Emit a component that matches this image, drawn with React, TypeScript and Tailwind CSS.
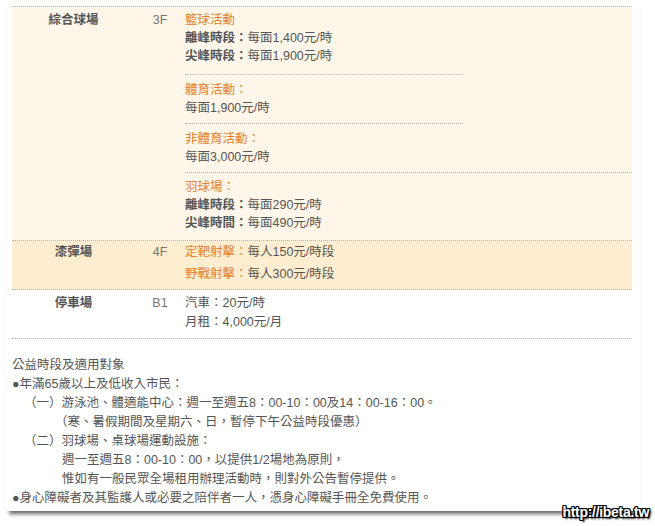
import React from 'react';

const orange = 'text-[#e6822a]';

const Sep = ({ short }: { short?: boolean }) => (
  <div className={`border-t border-dotted border-[#b5b0a8] ${short ? 'w-[278px]' : 'w-full'}`} />
);

const Bold = ({ children }: { children: React.ReactNode }) => (
  <span className="font-bold text-[#555]">{children}</span>
);

const notes = [
  { pl: 'pl-0', text: '公益時段及適用對象' },
  { pl: 'pl-0', text: '●年滿65歲以上及低收入市民：' },
  { pl: 'pl-[12px]', text: '（一）游泳池、體適能中心：週一至週五8：00-10：00及14：00-16：00。' },
  { pl: 'pl-[43px]', text: '（寒、暑假期間及星期六、日，暫停下午公益時段優惠）' },
  { pl: 'pl-[12px]', text: '（二）羽球場、桌球場運動設施：' },
  { pl: 'pl-[50px]', text: '週一至週五8：00-10：00，以提供1/2場地為原則，' },
  { pl: 'pl-[50px]', text: '惟如有一般民眾全場租用辦理活動時，則對外公告暫停提供。' },
  { pl: 'pl-0', text: '●身心障礙者及其監護人或必要之陪伴者一人，憑身心障礙手冊全免費使用。' },
];

export default function App() {
  return (
    <div className="relative w-[655px] h-[526px] overflow-hidden bg-white text-[12.5px] text-[#555] font-['Liberation_Sans','Noto_Sans_CJK_TC',sans-serif]">
      <div className="ml-[6px] w-[634px] h-[511px] bg-white pl-[6px] pr-[8px] pt-[6px] shadow-[0_6px_4px_-3px_rgba(0,0,0,0.6)]">
        {/* price table */}
        <div className="border-t border-dotted border-[#b5b0a8]">
          <div className="grid grid-cols-[123px_50px_1fr] bg-[#fef6e8] border-b border-dotted border-[#b5b0a8]">
            <div className="pt-[4px] leading-[18px] text-center font-bold text-[#555]">綜合球場</div>
            <div className="pt-[4px] leading-[18px] text-center text-[#777]">3F</div>
            <div className="leading-[18px]">
              <div className="pt-[4px] pb-[9px]">
                <div className={orange}>籃球活動</div>
                <div><Bold>離峰時段：</Bold>每面1,400元/時</div>
                <div><Bold>尖峰時段：</Bold>每面1,900元/時</div>
              </div>
              <Sep short />
              <div className="pt-[6px] pb-[6px]">
                <div className={orange}>體育活動：</div>
                <div>每面1,900元/時</div>
              </div>
              <Sep short />
              <div className="pt-[6px] pb-[6px]">
                <div className={orange}>非體育活動：</div>
                <div>每面3,000元/時</div>
              </div>
              <Sep />
              <div className="pt-[5px] pb-[8px]">
                <div className={orange}>羽球場：</div>
                <div><Bold>離峰時段：</Bold>每面290元/時</div>
                <div><Bold>尖峰時間：</Bold>每面490元/時</div>
              </div>
            </div>
          </div>

          <div className="grid grid-cols-[123px_50px_1fr] bg-[#feeecf] border-b border-dotted border-[#b5b0a8] leading-[22px] pb-[4px]">
            <div className="text-center font-bold text-[#555]">漆彈場</div>
            <div className="text-center text-[#777]">4F</div>
            <div>
              <div><span className={orange}>定靶射擊：</span>每人150元/時段</div>
              <div><span className={orange}>野戰射擊：</span>每人300元/時段</div>
            </div>
          </div>

          <div className="grid grid-cols-[123px_50px_1fr] bg-white border-b border-dotted border-[#b5b0a8] leading-[19px] pt-[4px] pb-[6px]">
            <div className="text-center font-bold text-[#555]">停車場</div>
            <div className="text-center text-[#777]">B1</div>
            <div>
              <div>汽車：20元/時</div>
              <div>月租：4,000元/月</div>
            </div>
          </div>
        </div>

        {/* notes */}
        <div className="mt-[17px] leading-[19px] text-[#555]">
          {notes.map((n, i) => (
            <div key={i} className={`${n.pl} whitespace-nowrap`}>{n.text}</div>
          ))}
        </div>
      </div>

      <div className="absolute right-[6px] top-[502px] text-[14px] font-bold text-white tracking-[-0.3px] [text-shadow:1px_1px_0_#000,-1px_-1px_0_#000,1px_-1px_0_#000,-1px_1px_0_#000,0_1px_0_#000,1px_0_0_#000,-1px_0_0_#000,0_-1px_0_#000,2px_2px_2px_#000]">
        http://ibeta.tw
      </div>
    </div>
  );
}
